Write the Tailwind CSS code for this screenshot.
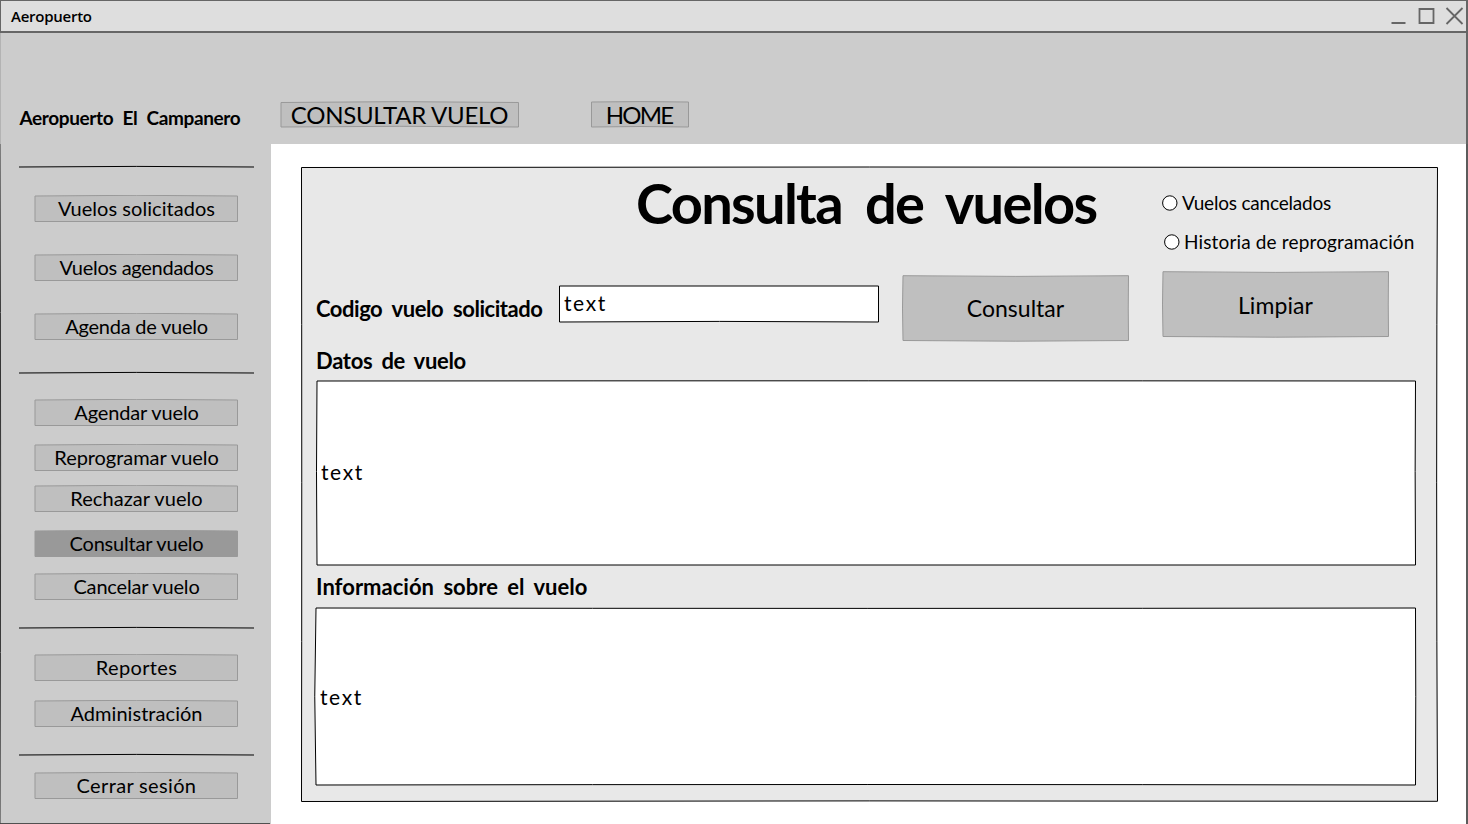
<!DOCTYPE html>
<html lang="es">
<head>
<meta charset="utf-8">
<title>Aeropuerto</title>
<script src="https://cdn.jsdelivr.net/npm/@tailwindcss/browser@4"></script>
</head>
<body class="w-[1468px] h-[824px] overflow-hidden bg-white text-black font-['Lato',sans-serif]">
<svg class="hidden">
  <symbol id="btn" viewBox="0 0 205 28"><path d="M1 1 Q103 -.4 203.5 1 V26.5 H1Z" fill="inherit" stroke="#999"/></symbol>
  <symbol id="big" viewBox="0 0 228 67"><path d="M1 .7 Q114 2.1 226.5 .7 Q226 33 226.5 65.5 Q114 66.9 1 65.5 Q0 33 1 .7Z" fill="#bfbfbf" stroke="#999"/></symbol>
  <symbol id="rule" viewBox="0 0 235 4"><path d="M0 2 Q117 .8 235 2" fill="none" stroke="#000"/></symbol>
</svg>
<div class="relative flex flex-col h-[824px]">
  <header class="h-[33px] shrink-0 bg-[#dedede] border-t border-l border-b-2 border-r-2 border-[#666] flex items-center justify-between pl-2.5">
    <span class="font-['Open_Sans',sans-serif] font-semibold text-[15px] tracking-[-0.25px] leading-none">Aeropuerto</span>
    <svg class="w-[76px] h-[30px]" viewBox="1390 1 76 30" fill="none" stroke="#666" stroke-width="2"><path d="M1391.5 23H1405.5"/><path d="M1419.5 9h14v14h-14z" stroke-width="1.8"/><path d="M1446.5 8l16 16M1462.5 8l-16 16" stroke-width="1.8"/></svg>
  </header>

  <nav class="h-[111px] shrink-0 bg-[#ccc] flex items-start pl-[19.5px] pt-[67px]">
    <div class="w-[260.5px] pt-[7px] font-bold text-[19px] leading-[22px] tracking-[-0.38px] [word-spacing:5px] whitespace-nowrap">Aeropuerto El Campanero</div>
    <div class="relative w-[239px] h-7 flex items-center justify-center">
      <svg class="absolute inset-0 w-full h-full" viewBox="0 0 239 28"><path d="M1 2.5 Q119 .8 238.5 2.5 V27 Q119 25.6 1 27Z" fill="#bfbfbf" stroke="#999"/></svg>
      <span class="relative text-[24px] leading-7 pt-[2px] tracking-[-0.28px] whitespace-nowrap">CONSULTAR VUELO</span>
    </div>
    <div class="relative w-[98px] h-7 ml-[72px] flex items-center justify-center">
      <svg class="absolute inset-0 w-full h-full" viewBox="0 0 98 28"><path d="M.5 2 Q49 1.2 97.5 2 V27 Q49 26 .5 27Z" fill="#bfbfbf" stroke="#999"/></svg>
      <span class="relative text-[24px] leading-7 pt-[2px] pr-[2px] tracking-[-1.8px]">HOME</span>
    </div>
  </nav>

  <div class="flex flex-1 min-h-0">
    <aside class="w-[271px] shrink-0 bg-[#ccc] flex flex-col pl-[34px] pt-[21px] text-[20px] leading-[26px] fill-[#bfbfbf]">
      <svg class="w-[235px] h-1 shrink-0 -ml-[15px]"><use href="#rule"/></svg>
      <div class="relative w-[205px] h-7 shrink-0 mt-[26px] text-center tracking-[0.05px]"><svg class="absolute inset-0 w-full h-full"><use href="#btn"/></svg><span class="relative">Vuelos solicitados</span></div>
      <div class="relative w-[205px] h-7 shrink-0 mt-[31px] text-center tracking-[-0.28px]"><svg class="absolute inset-0 w-full h-full"><use href="#btn"/></svg><span class="relative">Vuelos agendados</span></div>
      <div class="relative w-[205px] h-7 shrink-0 mt-[31px] text-center tracking-[-0.24px]"><svg class="absolute inset-0 w-full h-full"><use href="#btn"/></svg><span class="relative">Agenda de vuelo</span></div>
      <svg class="w-[235px] h-1 shrink-0 -ml-[15px] mt-[30px]"><use href="#rule"/></svg>
      <div class="relative w-[205px] h-7 shrink-0 mt-6 text-center tracking-[-0.15px]"><svg class="absolute inset-0 w-full h-full"><use href="#btn"/></svg><span class="relative">Agendar vuelo</span></div>
      <div class="relative w-[205px] h-7 shrink-0 mt-[17px] text-center tracking-[-0.05px]"><svg class="absolute inset-0 w-full h-full"><use href="#btn"/></svg><span class="relative">Reprogramar vuelo</span></div>
      <div class="relative w-[205px] h-7 shrink-0 mt-[13px] text-center tracking-[0.05px]"><svg class="absolute inset-0 w-full h-full"><use href="#btn"/></svg><span class="relative">Rechazar vuelo</span></div>
      <div class="relative w-[205px] h-7 shrink-0 mt-[17px] text-center tracking-[-0.2px] fill-[#999]"><svg class="absolute inset-0 w-full h-full"><use href="#btn"/></svg><span class="relative">Consultar vuelo</span></div>
      <div class="relative w-[205px] h-7 shrink-0 mt-[15px] text-center tracking-[-0.18px]"><svg class="absolute inset-0 w-full h-full"><use href="#btn"/></svg><span class="relative">Cancelar vuelo</span></div>
      <svg class="w-[235px] h-1 shrink-0 -ml-[15px] mt-[25px]"><use href="#rule"/></svg>
      <div class="relative w-[205px] h-7 shrink-0 mt-6 text-center tracking-[0.35px]"><svg class="absolute inset-0 w-full h-full"><use href="#btn"/></svg><span class="relative">Reportes</span></div>
      <div class="relative w-[205px] h-7 shrink-0 mt-[18px] text-center tracking-[0.05px]"><svg class="absolute inset-0 w-full h-full"><use href="#btn"/></svg><span class="relative">Administración</span></div>
      <svg class="w-[235px] h-1 shrink-0 -ml-[15px] mt-[25px]"><use href="#rule"/></svg>
      <div class="relative w-[205px] h-7 shrink-0 mt-[15px] text-center tracking-[0.35px]"><svg class="absolute inset-0 w-full h-full"><use href="#btn"/></svg><span class="relative">Cerrar sesión</span></div>
    </aside>

    <main class="pt-[22px] pl-[29px]">
      <section class="relative w-[1139px] h-[637px] pt-[2px] pl-[2px]">
        <svg class="absolute inset-0 w-full h-full" viewBox="300 166 1139 637"><path d="M301.5 167.5 Q870 166.5 1437.5 167.5 Q1435.8 480 1437.5 801.3 Q870 800.4 301.5 801.5 Q302 480 301.5 167.5Z" fill="#e8e8e8" stroke="#000"/></svg>
        <div class="relative flex">
          <div class="w-[860px]">
            <h1 class="h-[107px] pl-[334px] text-[56px] font-bold leading-[70px] tracking-[-1.7px] [word-spacing:11px] whitespace-nowrap">Consulta de vuelos</h1>
            <div class="flex items-start pl-[14px]">
              <label class="w-[242px] pt-[20px] text-[22px] leading-7 font-bold tracking-[-0.47px] [word-spacing:5px] whitespace-nowrap">Codigo vuelo solicitado</label>
              <div class="relative w-[322px] h-[38px] mt-[10px] pl-[6px] pb-[2px] flex items-center text-[21px] tracking-[1.6px]">
                <svg class="absolute inset-0 w-full h-full" viewBox="558 285 322 38"><path d="M559.5 286H878.5V322Q720 320.8 559.5 322Z" fill="#fff" stroke="#000"/></svg>
                <span class="relative">text</span>
              </div>
              <div class="relative w-[228px] h-[67px] ml-[21.5px] text-center text-[23px] leading-[66px]"><svg class="absolute inset-0 w-full h-full"><use href="#big"/></svg><span class="relative">Consultar</span></div>
            </div>
          </div>
          <div class="pt-[21px]">
            <label class="flex items-center h-[28px] text-[19px] tracking-[-0.2px] whitespace-nowrap"><svg class="w-[17px] h-[17px] mr-[3px]"><circle cx="7.8" cy="8" r="7.2" fill="#fff" stroke="#000"/></svg>Vuelos cancelados</label>
            <label class="flex items-center h-[28px] mt-[11px] pl-[2px] text-[19px] tracking-[0.15px] whitespace-nowrap"><svg class="w-[17px] h-[17px] mr-[3px]"><circle cx="7.8" cy="8" r="7.2" fill="#fff" stroke="#000"/></svg>Historia de reprogramación</label>
            <div class="relative w-[228px] h-[67px] mt-[15px] -ml-[0.5px] text-center text-[23px] leading-[68px] tracking-[0.1px]"><svg class="absolute inset-0 w-full h-full"><use href="#big"/></svg><span class="relative">Limpiar</span></div>
          </div>
        </div>
        <h2 class="relative pl-[14px] mt-[5px] h-[33px] text-[22px] leading-7 font-bold tracking-[-0.3px] [word-spacing:4px]">Datos de vuelo</h2>
        <div class="relative ml-[13px] w-[1102px] h-[187px] pl-[6px] pb-[3px] flex items-center text-[21px] tracking-[1.6px]">
          <svg class="absolute inset-0 w-full h-full overflow-visible" viewBox="315 380 1102 187"><path d="M317 381Q870 380.6 1415.5 381Q1414.8 470 1415.5 565H317Q316 470 317 381Z" fill="#fff" stroke="#000"/></svg>
          <span class="relative">text</span>
        </div>
        <h2 class="relative pl-[14px] mt-[6px] h-[35px] text-[22px] leading-7 font-bold tracking-[0.02px] [word-spacing:4px]">Información sobre el vuelo</h2>
        <div class="relative ml-[12px] w-[1103px] h-[180px] pl-[6px] pb-[3px] flex items-center text-[21px] tracking-[1.6px]">
          <svg class="absolute inset-0 w-full h-full overflow-visible" viewBox="314 608 1103 180"><path d="M316 608Q870 608.8 1415.5 608Q1416 696 1415.5 785Q870 784 316 785Q313.5 696 316 608Z" fill="#fff" stroke="#000"/></svg>
          <span class="relative">text</span>
        </div>
      </section>
    </main>
  </div>
  <svg class="absolute inset-0 w-full h-full pointer-events-none" viewBox="0 0 1468 824" fill="none"><path d="M1467 33V144" stroke="#666" stroke-width="2"/><path d="M1467 144Q1466 480 1467 824" stroke="#333" stroke-width="1.6"/><path d="M0 144Q1.2 480 0 824" stroke="#333"/><path d="M0 33V144" stroke="#999"/><path d="M0 823.6H270" stroke="#444"/></svg>
</div>
</body>
</html>
